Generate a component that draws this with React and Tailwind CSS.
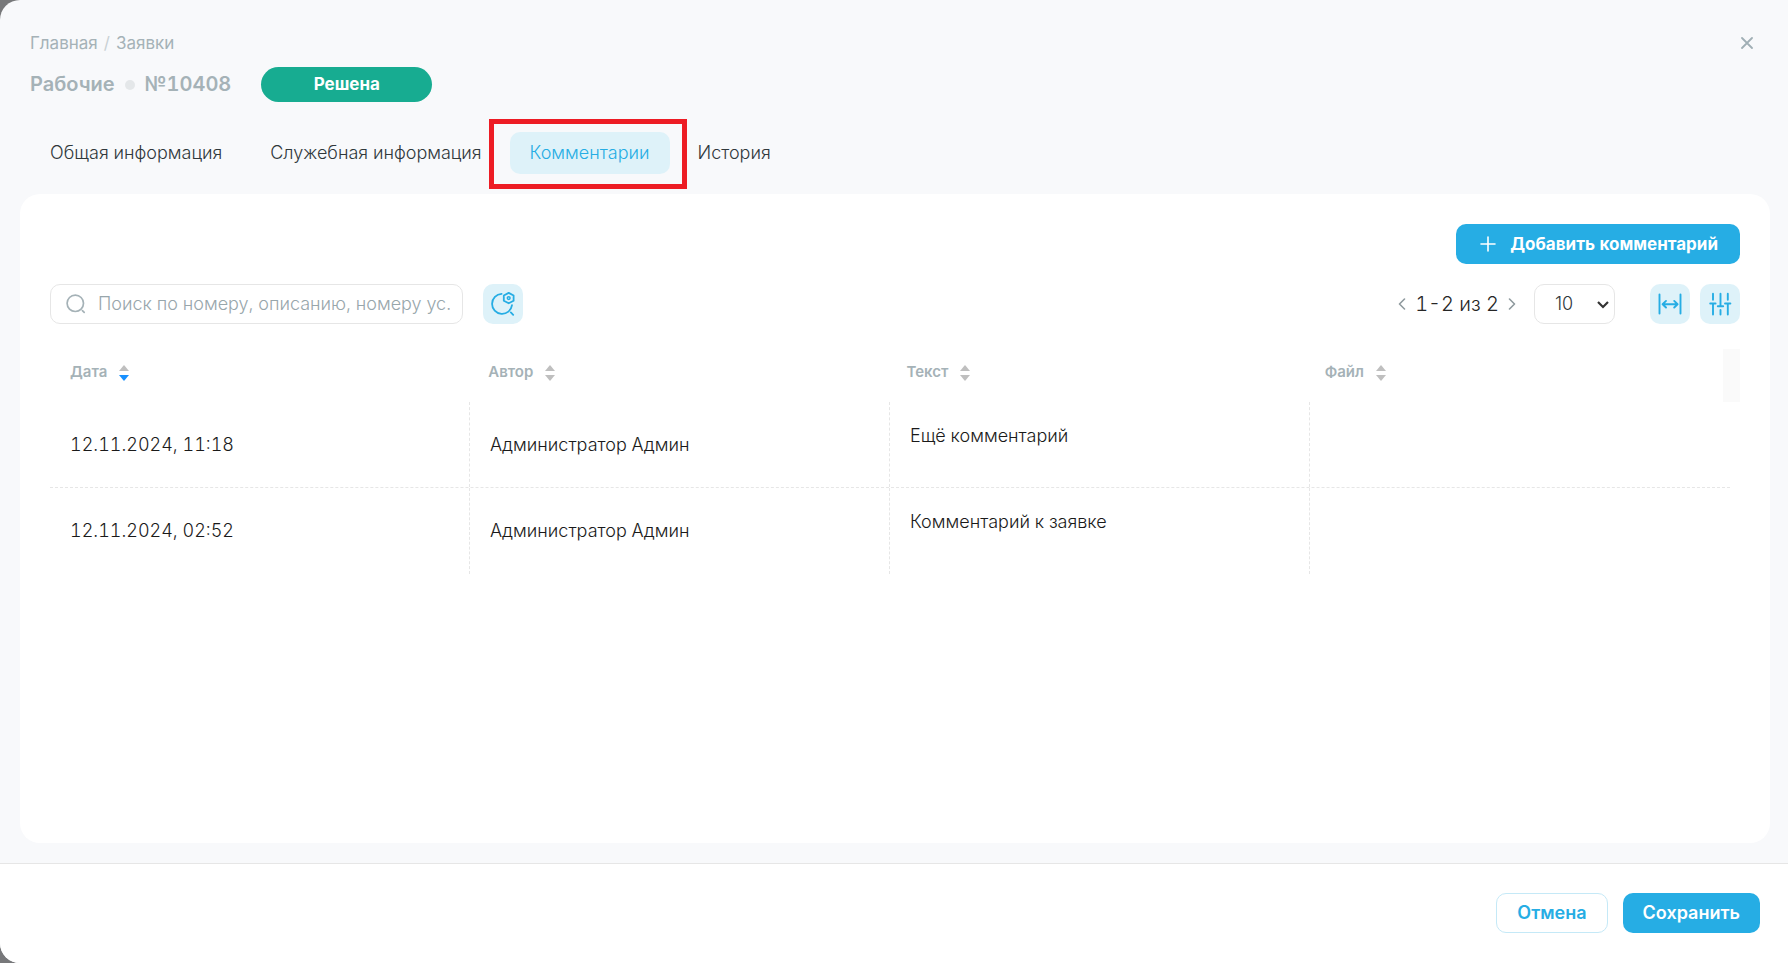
import { useState } from 'react';

const tabs = ['Общая информация', 'Служебная информация', 'Комментарии', 'История'];

const columns = [
    { key: 'date', label: 'Дата', sorted: true },
    { key: 'author', label: 'Автор' },
    { key: 'text', label: 'Текст' },
    { key: 'file', label: 'Файл' },
];

const comments = [
    { id: 1, date: '12.11.2024, 11:18', author: 'Администратор Админ', text: 'Ещё комментарий' },
    { id: 2, date: '12.11.2024, 02:52', author: 'Администратор Админ', text: 'Комментарий к заявке' },
];

const CloseIcon = () => (
    <svg width="12" height="12" viewBox="0 0 12 12" fill="none" stroke="currentColor" strokeWidth="1.8" strokeLinecap="round">
        <path d="M1 1l10 10M11 1L1 11" />
    </svg>
);

const PlusIcon = () => (
    <svg width="16" height="16" viewBox="0 0 16 16" fill="none" stroke="currentColor" strokeWidth="1.6" strokeLinecap="round">
        <path d="M8 1v14M1 8h14" />
    </svg>
);

const SearchIcon = () => (
    <svg width="20" height="20" viewBox="0 0 20 20" fill="none" stroke="currentColor" strokeWidth="1.7" strokeLinecap="round">
        <circle cx="9.3" cy="9.3" r="8.2" />
        <path d="M16.4 16.6l1.8 1.8" />
    </svg>
);

const SearchSettingsIcon = () => (
    <svg width="24" height="24" viewBox="0 0 24 24" fill="none" stroke="currentColor" strokeWidth="1.8" strokeLinecap="round">
        <path d="M10.6 1.9A10 10 0 1 0 21 13.2" />
        <path d="M19.8 20.4l2.4 2.4" />
        <path d="M17.7 .9l4.9 2.6v5.2l-4.9 2.6-4.9-2.6V3.5z" strokeLinejoin="round" />
        <circle cx="17.7" cy="6.1" r="1.4" strokeWidth="1.5" />
    </svg>
);

const WidthIcon = () => (
    <svg width="24" height="24" viewBox="0 0 24 24" fill="none" stroke="currentColor" strokeWidth="1.9" strokeLinecap="round" strokeLinejoin="round">
        <path d="M1.5 2.5v19M22.5 2.5v19M4.6 12.2h15M8 8.9l-3.4 3.3L8 15.5M16.2 8.9l3.4 3.3-3.4 3.3" />
    </svg>
);

const SlidersIcon = () => (
    <svg width="24" height="24" viewBox="0 0 24 24" fill="none" stroke="currentColor" strokeWidth="1.9" strokeLinecap="round">
        <path d="M5 1.8v6M2.2 11.5h5.4M5 11.5v11M12.5 1.8v12M9.8 14.2h5.4M12.5 18v4.5M19.8 1.8v6M17 11.5h5.4M19.8 11.5v11" />
    </svg>
);

const ChevronIcon = ({ className }) => (
    <svg className={className} width="8" height="12" viewBox="0 0 8 12" fill="none" stroke="currentColor" strokeWidth="1.6" strokeLinecap="round" strokeLinejoin="round">
        <path d="M6.5 1L1.5 6l5 5" />
    </svg>
);

const SortIcon = ({ sorted }) => (
    <svg width="10" height="16" viewBox="0 0 10 16">
        <path d="M5 0l5 6H0z" fill="#bfbfbf" />
        <path d="M5 16l5-6H0z" fill={sorted ? '#1890ff' : '#bfbfbf'} />
    </svg>
);

const IconButton = ({ label, children }) => (
    <button
        type="button"
        aria-label={label}
        className="flex size-10 shrink-0 items-center justify-center rounded-[10px] bg-[#def2f9] text-[#26ade4]"
    >
        {children}
    </button>
);

const Header = ({ activeTab, onTabChange }) => (
    <header className="px-[30px] pt-[30px]">
        <div className="flex items-center justify-between">
            <nav className="flex gap-[6px] text-[17px] leading-[26px] text-[#a5b2b7]">
                <a href="#main">Главная</a>
                <span className="text-[#c9d1d4]">/</span>
                <a href="#requests">Заявки</a>
            </nav>
            <button type="button" aria-label="Закрыть" className="flex size-[22px] items-center justify-center text-[#a0afb5]">
                <CloseIcon />
            </button>
        </div>
        <div className="mt-[11px] flex items-center">
            <h1 className="flex items-center gap-[10px] text-[20px] leading-[35px] font-semibold text-[#a5b2b7]">
                Рабочие
                <span className="size-[10px] rounded-full bg-[#e4e7e9]" />
                №10408
            </h1>
            <span className="ml-[30px] w-[171px] rounded-full bg-[#17ac91] text-center text-[17px] leading-[35px] font-bold text-white">
                Решена
            </span>
        </div>
        <div role="tablist" className="mt-[30px] flex gap-2">
            {tabs.map((tab) => {
                const active = tab === activeTab;
                return (
                    <div key={tab} className="relative">
                        <button
                            type="button"
                            role="tab"
                            aria-selected={active}
                            onClick={() => onTabChange(tab)}
                            className={`h-[42px] rounded-[10px] px-5 text-[18px] leading-[26px] font-light whitespace-nowrap ${
                                active ? 'bg-[#def2f9] text-[#26ade4]' : 'text-[#30383b]'
                            }`}
                        >
                            {tab}
                        </button>
                        {/* Highlight frame round the current tab */}
                        {active && (
                            <span className="pointer-events-none absolute -top-[13px] -right-[17px] -bottom-[15px] -left-[21px] border-[5px] border-[#ed1c24]" />
                        )}
                    </div>
                );
            })}
        </div>
    </header>
);

const Toolbar = () => (
    <div className="mt-5 flex items-center">
        <div className="flex h-10 w-[413px] items-center rounded-[10px] border border-[#e6e6e6] pr-3 pl-[15px] text-[#a5b2b7]">
            <label htmlFor="search" aria-label="Поиск">
                <SearchIcon />
            </label>
            <input
                id="search"
                type="text"
                placeholder="Поиск по номеру, описанию, номеру ус."
                className="ml-3 h-[26px] min-w-0 flex-1 bg-transparent text-[18px] leading-[26px] font-light outline-none placeholder:text-[#98a6ab]"
            />
        </div>
        <div className="ml-5">
            <IconButton label="Настройки поиска">
                <SearchSettingsIcon />
            </IconButton>
        </div>
        <div className="ml-auto flex items-center">
            <button type="button" aria-label="Назад" className="text-[#8f9a9e]">
                <ChevronIcon />
            </button>
            <span className="mx-[9px] text-[20px] leading-6 font-light text-[#262626]">1-2 из 2</span>
            <button type="button" aria-label="Вперёд" className="text-[#8f9a9e]">
                <ChevronIcon className="rotate-180" />
            </button>
            <div className="relative ml-[18px]">
                <select
                    aria-label="Записей на странице"
                    className="h-10 w-[81px] appearance-none rounded-[10px] border border-[#e6e6e6] bg-white pl-5 text-[18px] leading-[26px] font-light text-[#30383b] proportional-nums"
                >
                    <option>10</option>
                    <option>20</option>
                    <option>50</option>
                </select>
                <svg className="pointer-events-none absolute top-[17px] right-[6px]" width="12" height="8" viewBox="0 0 12 8" fill="none" stroke="#333" strokeWidth="2.2">
                    <path d="M1 1l5 5 5-5" />
                </svg>
            </div>
            <div className="ml-[35px] flex gap-[10px]">
                <IconButton label="Ширина столбцов">
                    <WidthIcon />
                </IconButton>
                <IconButton label="Настройка столбцов">
                    <SlidersIcon />
                </IconButton>
            </div>
        </div>
    </div>
);

const CommentsTable = () => (
    <table className="mt-[25px] block">
        <thead className="block">
            <tr className="grid grid-cols-[repeat(4,1fr)_17px]">
                {columns.map((column) => (
                    <th key={column.key} className="flex h-[53px] items-center pb-[6px] pl-5 text-[15px] font-semibold text-[#a5b2b7]">
                        <button type="button" className="flex items-center gap-3">
                            {column.label}
                            <SortIcon sorted={column.sorted} />
                        </button>
                    </th>
                ))}
                <td className="bg-[#fafafa]" />
            </tr>
        </thead>
        <tbody className="mr-[10px] block text-[18px] leading-[26px] font-light text-[#1a1a1a]">
            {comments.map((comment) => (
                <tr key={comment.id} className="grid h-[86px] grid-cols-4 border-b border-dashed border-[#e6e6e6] last:border-b-0">
                    <td className="flex items-center border-r border-dashed border-[#e6e6e6] pl-5">{comment.date}</td>
                    <td className="flex items-center border-r border-dashed border-[#e6e6e6] pl-5">{comment.author}</td>
                    <td className="flex items-center border-r border-dashed border-[#e6e6e6] pb-[18px] pl-5">{comment.text}</td>
                    <td />
                </tr>
            ))}
        </tbody>
    </table>
);

const Footer = () => (
    <footer className="flex justify-end gap-[15px] border-t border-[#e6e6e6] bg-white px-7 pt-[29px] pb-[30px] text-[18px] leading-[26px] font-semibold">
        <button type="button" className="h-10 rounded-[10px] border border-[#c5e9f7] px-5 text-[#26ade4]">
            Отмена
        </button>
        <button type="submit" className="h-10 rounded-[10px] bg-[#26ade4] px-5 text-white">
            Сохранить
        </button>
    </footer>
);

const App = () => {
    const [activeTab, setActiveTab] = useState('Комментарии');

    return (
        <div className="min-h-screen bg-[#77787a] font-['Inter',sans-serif] tabular-nums">
            <div className="flex min-h-screen flex-col overflow-hidden rounded-l-[20px] bg-[#f8f9fb]">
                <Header activeTab={activeTab} onTabChange={setActiveTab} />
                <main className="mt-5 mr-[18px] mb-5 ml-5 flex-1 rounded-[20px] bg-white p-[30px]">
                    <div className="flex justify-end">
                        <button
                            type="button"
                            className="flex h-10 items-center gap-[14px] rounded-[10px] bg-[#26ade4] pr-[22px] pl-6 text-[17px] leading-[26px] font-bold text-white"
                        >
                            <PlusIcon />
                            Добавить комментарий
                        </button>
                    </div>
                    <Toolbar />
                    <CommentsTable />
                </main>
                <Footer />
            </div>
        </div>
    );
};

export default App;
